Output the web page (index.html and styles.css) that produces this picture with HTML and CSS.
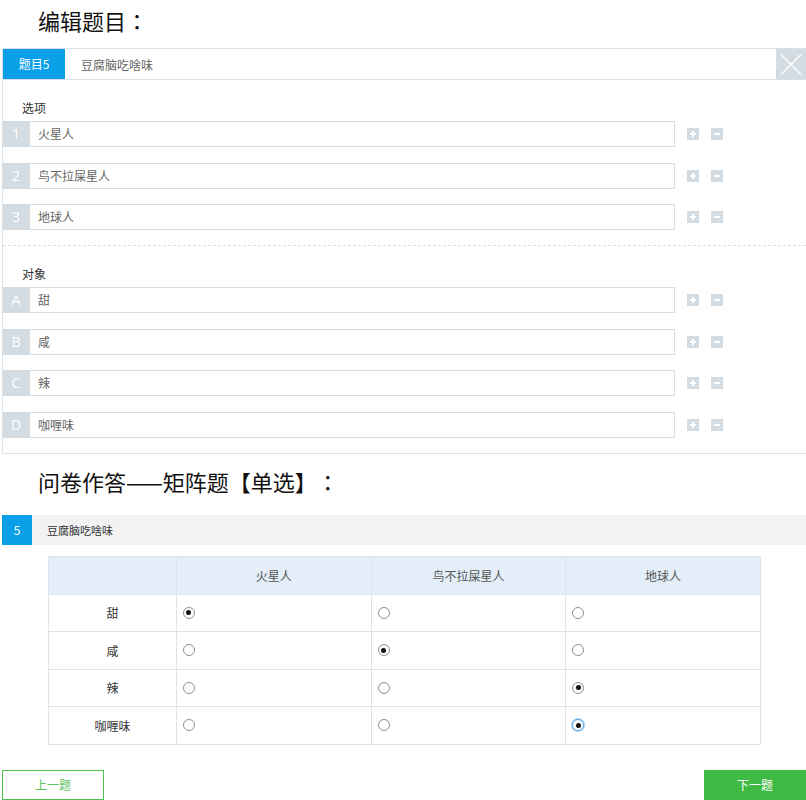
FILE: index.html
```html
<!DOCTYPE html>
<html>
  <head>
    <meta charset="utf-8" />
    <title>矩阵题</title>
    <link rel="stylesheet" href="styles.css">
  </head>
  <body>
    <h2 class="page-title">编辑题目：</h2>

    <div class="editor">
      <div class="editor-head">
        <div class="tab">题目5</div>
        <div class="head-text">豆腐脑吃啥味</div>
        <div class="close-btn">
          <svg width="30" height="31" viewBox="0 0 30 31">
            <path d="M5 5.5 L25 25.5 M25 5.5 L5 25.5" stroke="#fff" stroke-width="1.4" fill="none" />
          </svg>
        </div>
      </div>

      <div class="section">
        <div class="section-label">选项</div>
        <div class="item-row">
          <span class="item-no">1</span>
          <div class="item-input">火星人</div>
          <span class="op op-add"></span>
          <span class="op op-del"></span>
        </div>
        <div class="item-row">
          <span class="item-no">2</span>
          <div class="item-input">鸟不拉屎星人</div>
          <span class="op op-add"></span>
          <span class="op op-del"></span>
        </div>
        <div class="item-row">
          <span class="item-no">3</span>
          <div class="item-input">地球人</div>
          <span class="op op-add"></span>
          <span class="op op-del"></span>
        </div>
      </div>

      <div class="section section-dashed">
        <div class="section-label">对象</div>
        <div class="item-row">
          <span class="item-no">A</span>
          <div class="item-input">甜</div>
          <span class="op op-add"></span>
          <span class="op op-del"></span>
        </div>
        <div class="item-row">
          <span class="item-no">B</span>
          <div class="item-input">咸</div>
          <span class="op op-add"></span>
          <span class="op op-del"></span>
        </div>
        <div class="item-row">
          <span class="item-no">C</span>
          <div class="item-input">辣</div>
          <span class="op op-add"></span>
          <span class="op op-del"></span>
        </div>
        <div class="item-row">
          <span class="item-no">D</span>
          <div class="item-input">咖喱味</div>
          <span class="op op-add"></span>
          <span class="op op-del"></span>
        </div>
      </div>
    </div>

    <h2 class="page-title page-title-2">问卷作答——矩阵题【单选】：</h2>

    <div class="question-bar">
      <span class="q-no">5</span>
      <span class="q-text">豆腐脑吃啥味</span>
    </div>

    <table class="matrix">
      <thead>
        <tr>
          <th class="col-first"></th>
          <th>火星人</th>
          <th>鸟不拉屎星人</th>
          <th>地球人</th>
        </tr>
      </thead>
      <tbody>
        <tr>
          <td class="row-name">甜</td>
          <td><span class="radio checked"></span></td>
          <td><span class="radio"></span></td>
          <td><span class="radio"></span></td>
        </tr>
        <tr>
          <td class="row-name">咸</td>
          <td><span class="radio"></span></td>
          <td><span class="radio checked"></span></td>
          <td><span class="radio"></span></td>
        </tr>
        <tr>
          <td class="row-name">辣</td>
          <td><span class="radio"></span></td>
          <td><span class="radio"></span></td>
          <td><span class="radio checked"></span></td>
        </tr>
        <tr>
          <td class="row-name">咖喱味</td>
          <td><span class="radio"></span></td>
          <td><span class="radio"></span></td>
          <td><span class="radio checked focus"></span></td>
        </tr>
      </tbody>
    </table>

    <div class="pager">
      <button class="btn btn-prev">上一题</button>
      <button class="btn btn-next">下一题</button>
    </div>
  </body>
</html>
```

FILE: styles.css
```css
* {
  margin: 0;
  padding: 0;
  box-sizing: border-box;
}

body {
  width: 806px;
  padding-top: 5px;
  font-family: "Noto Sans CJK SC", "Noto Sans", sans-serif;
  font-size: 12px;
  color: #333;
  background: #fff;
}

/* 标题的全角标点居中，不压缩 */
.page-title {
  font-family: "Noto Sans CJK TC", "Noto Sans CJK SC", sans-serif;
  font-size: 22px;
  font-weight: 400;
  line-height: 30px;
  color: #111;
  padding-left: 38px;
  margin-bottom: 13px;
  text-spacing-trim: space-all;
}

.page-title-2 {
  margin-top: 12px;
  margin-bottom: 19px;
}

/* 编辑面板 */
.editor {
  margin-left: 2px;
  width: 804px;
  border: 1px solid #d9e1e7;
  border-right: none;
}

.editor-head {
  display: flex;
  align-items: center;
  height: 31px;
  border-bottom: 1px solid #d9e1e7;
}

.tab {
  width: 62px;
  height: 30px;
  line-height: 30px;
  text-align: center;
  background: #0aa0e8;
  color: #fff;
  font-size: 12px;
}

.head-text {
  flex: 1;
  padding-left: 16px;
  color: #666;
  font-size: 12px;
}

.close-btn {
  width: 30px;
  height: 30px;
  background: #d3dce2;
  display: flex;
  align-items: center;
  justify-content: center;
}

.section {
  padding: 18px 0 15px;
}

.section-dashed {
  border-top: 1px dashed #d9e1e7;
  padding-top: 18px;
}

.section-label {
  line-height: 20px;
  padding-left: 19px;
  font-size: 12px;
  color: #333;
  margin-bottom: 3px;
}

.item-row {
  display: flex;
  align-items: center;
  height: 26px;
  margin-bottom: 15.5px;
}

.item-row:last-child {
  margin-bottom: 0;
}

.item-no {
  width: 26px;
  height: 26px;
  line-height: 26px;
  text-align: center;
  background: #d3dce2;
  color: #fff;
  font-family: "Open Sans", sans-serif;
  font-size: 14px;
}

.item-input {
  width: 646px;
  height: 26px;
  line-height: 24px;
  border: 1px solid #d6dee4;
  padding-left: 8px;
  color: #666;
  font-size: 12px;
}

.op {
  position: relative;
  width: 12px;
  height: 12px;
  background: #d3dce2;
  margin-left: 12px;
}

.op::before,
.op-add::after {
  content: "";
  position: absolute;
  background: #fff;
  left: 3px;
  top: 5px;
  width: 6px;
  height: 2px;
}

.op-add::after {
  left: 5px;
  top: 3px;
  width: 2px;
  height: 6px;
}

/* 作答区 */
.question-bar {
  display: flex;
  align-items: center;
  margin-left: 2px;
  height: 30px;
  background: #f2f2f2;
}

.q-no {
  width: 30px;
  height: 30px;
  line-height: 30px;
  text-align: center;
  background: #0aa0e8;
  color: #fff;
  font-size: 12px;
}

.q-text {
  padding-left: 15px;
  font-size: 11px;
  color: #333;
}

.matrix {
  margin: 11px 0 0 48px;
  width: 713px;
  border-collapse: collapse;
  font-size: 12px;
}

.matrix th,
.matrix td {
  border: 1px solid #dde4ea;
}

.matrix th {
  height: 38px;
  width: 195px;
  background: #e3eef8;
  font-weight: 400;
  color: #555;
}

.matrix th.col-first {
  width: 128px;
}

.matrix td {
  height: 37.5px;
  padding-left: 6px;
}

.matrix td.row-name {
  text-align: center;
  padding-left: 0;
  color: #333;
}

.radio {
  display: block;
  position: relative;
  width: 12px;
  height: 12px;
  border: 1px solid #8f8f8f;
  border-radius: 50%;
  background: #fff;
}

.radio.checked::after {
  content: "";
  position: absolute;
  left: 2.5px;
  top: 2.5px;
  width: 5px;
  height: 5px;
  border-radius: 50%;
  background: #111;
}

.radio.focus {
  border-color: #5aa9df;
  box-shadow: 0 0 0 1px #a8d4f3;
}

.pager {
  display: flex;
  justify-content: space-between;
  margin: 25px 0 0 2px;
}

.btn {
  width: 102px;
  height: 30px;
  font-family: inherit;
  font-size: 12px;
  cursor: pointer;
}

.btn-prev {
  background: #fff;
  border: 1px solid #4fc052;
  color: #5cc45f;
}

.btn-next {
  background: #3fbb45;
  border: none;
  color: #fff;
}
```
